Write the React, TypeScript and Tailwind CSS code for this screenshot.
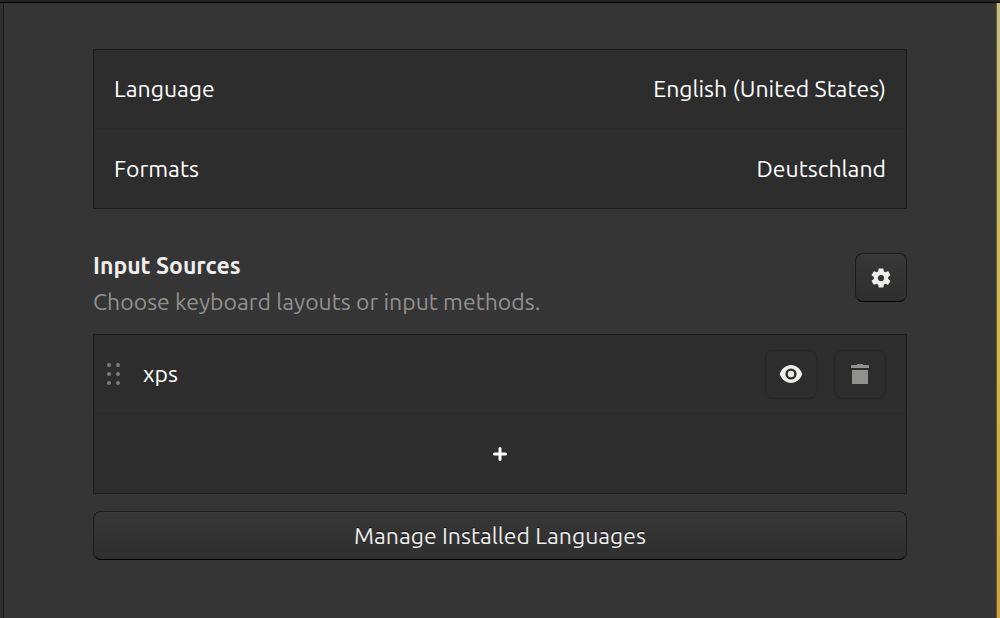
import type { ReactNode } from "react";

const raised =
  "rounded-lg border border-[#1c1c1c] border-b-black bg-linear-to-b from-[#373737] to-[#2f2f2f] shadow-[inset_0_1px_#3c3c3c] [text-shadow:0_-1px_#111111]";

function GearIcon() {
  return (
    <svg viewBox="0 0 24 24" className="size-6" fill="currentColor" aria-hidden="true">
      <path d="M19.14 12.94c.04-.3.06-.61.06-.94 0-.32-.02-.64-.07-.94l2.03-1.58a.49.49 0 0 0 .12-.61l-1.92-3.32a.49.49 0 0 0-.59-.22l-2.39.96a7 7 0 0 0-1.62-.94l-.36-2.54a.48.48 0 0 0-.48-.41h-3.84a.48.48 0 0 0-.47.41l-.36 2.54c-.59.24-1.13.57-1.62.94l-2.39-.96a.48.48 0 0 0-.59.22L2.740 8.870a.48.48 0 0 0 .12.61l2.03 1.58a6 6 0 0 0-.07.94c0 .31.02.64.07.94l-2.03 1.58a.49.49 0 0 0-.12.61l1.92 3.32c.12.22.37.29.59.22l2.39-.96c.5.38 1.03.7 1.62.94l.36 2.54c.05.24.24.41.48.41h3.84c.24 0 .44-.17.47-.41l.36-2.54a7 7 0 0 0 1.62-.94l2.39.96c.22.08.47 0 .59-.22l1.92-3.32a.48.48 0 0 0-.12-.61zM12 15.1a3.1 3.1 0 1 1 0-6.2 3.1 3.1 0 0 1 0 6.2z" />
    </svg>
  );
}

function EyeIcon() {
  return (
    <svg viewBox="0 0 24 24" className="size-6" fill="currentColor" aria-hidden="true">
      <path
        fillRule="evenodd"
        d="M12 3C7 3 2.6 6.6.7 12 2.6 17.4 7 21 12 21s9.4-3.6 11.3-9C21.4 6.6 17 3 12 3zm0 3.400a5.600 5.600 0 1 1 0 11.200 5.600 5.600 0 0 1 0-11.200z"
      />
      <circle cx="12" cy="12" r="3.200" />
    </svg>
  );
}

function TrashIcon() {
  return (
    <svg viewBox="0 0 20 22" className="h-[22px] w-5" fill="currentColor" aria-hidden="true">
      <path d="M1 5V3a1 1 0 0 1 1-1h4.500l1-1h5l1 1H18a1 1 0 0 1 1 1v2zM2 7h16v14H2z" />
    </svg>
  );
}

function GripIcon() {
  return (
    <svg viewBox="0 0 14 22" className="h-[22px] w-3.5 text-[#7b7b7b]" fill="currentColor" aria-hidden="true">
      {[3, 12].map((x) =>
        [2, 11, 20].map((y) => <circle key={`${x}-${y}`} cx={x} cy={y} r="2" />),
      )}
    </svg>
  );
}

function SettingRow({ label, value }: { label: string; value: string }) {
  return (
    <button type="button" className="flex h-[79px] w-full items-center justify-between px-5 text-white">
      <span>{label}</span>
      <span>{value}</span>
    </button>
  );
}

function FlatButton({ label, className, children }: { label: string; className: string; children: ReactNode }) {
  return (
    <button
      type="button"
      aria-label={label}
      className={`flex h-[49px] w-[52px] items-center justify-center rounded-lg border border-[#262626] ${className}`}
    >
      {children}
    </button>
  );
}

export default function App() {
  return (
    <div className="flex min-h-screen flex-col bg-[#353535] font-['Ubuntu','Noto_Sans',sans-serif] text-[23px] leading-9 text-[#eeeeec]">
      <div className="h-[3px] border-b border-black bg-[#242424]" />
      <div className="flex flex-1">
        <div className="w-1 border-r border-[#1c1c1c] bg-[#2f2f2f]" />
        <main className="flex-1 px-[89px] pt-[46px] pb-8">
          <section className="divide-y divide-[#292929] border border-[#1c1c1c] bg-[#2d2d2d]">
            <SettingRow label="Language" value="English (United States)" />
            <SettingRow label="Formats" value="Deutschland" />
          </section>

          <section className="mt-[39px]">
            <div className="flex items-start justify-between">
              <div>
                <h2 className="font-bold">Input Sources</h2>
                <p className="text-[#919190]">Choose keyboard layouts or input methods.</p>
              </div>
              <button
                type="button"
                aria-label="Input source options"
                className={`mt-[5px] flex h-[49px] w-[52px] items-center justify-center ${raised}`}
              >
                <GearIcon />
              </button>
            </div>

            <div className="mt-3.5 divide-y divide-[#292929] border border-[#1c1c1c] bg-[#2d2d2d]">
              <div className="flex h-[79px] items-center pr-5 pl-3">
                <GripIcon />
                <span className="ml-[23px] flex-1 text-white">xps</span>
                <div className="flex gap-[17px]">
                  <FlatButton label="View layout" className="text-[#eeeeec]">
                    <EyeIcon />
                  </FlatButton>
                  <FlatButton label="Remove" className="text-[#919190]">
                    <TrashIcon />
                  </FlatButton>
                </div>
              </div>
              <button type="button" aria-label="Add input source" className="flex h-[79px] w-full items-center justify-center text-white">
                <svg viewBox="0 0 16 16" className="size-4" stroke="currentColor" strokeWidth="3" strokeLinecap="round" aria-hidden="true">
                  <path d="M8 2.500v11M2.500 8h11" />
                </svg>
              </button>
            </div>

            <button type="button" className={`mt-[17px] flex h-[49px] w-full items-center justify-center ${raised}`}>
              Manage Installed Languages
            </button>
          </section>
        </main>
        <div className="w-1 border-l border-[#6b5a2c] bg-linear-to-b from-[#c4bd86] via-[#cdbb50] to-[#cba242]" />
      </div>
    </div>
  );
}
